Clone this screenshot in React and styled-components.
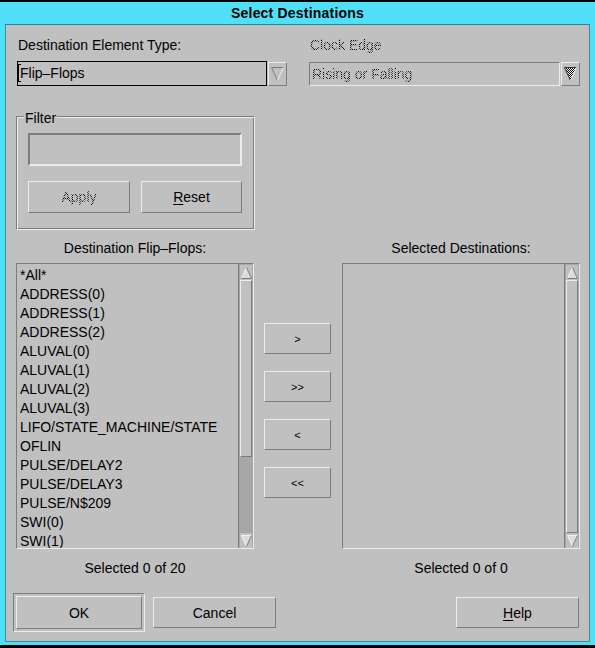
import React from 'react';
import styled, { createGlobalStyle, css } from 'styled-components';

const FACE = '#c0c0c0';
const LIGHT = '#ececec';
const DARK = '#7c7c7c';
const CYAN = '#4fe0f8';

const GlobalStyle = createGlobalStyle`
  html, body {
    margin: 0;
    padding: 0;
    background: #000;
  }
  body {
    font-family: "Liberation Sans", Arial, sans-serif;
    color: #000;
  }
`;

const raised = css`
  border: 1px solid;
  border-color: ${LIGHT} ${DARK} ${DARK} ${LIGHT};
`;

const sunken = css`
  border: 1px solid;
  border-color: ${DARK} ${LIGHT} ${LIGHT} ${DARK};
`;

const etched = css`
  border: 1px solid;
  border-color: ${DARK} ${LIGHT} ${LIGHT} ${DARK};
  box-shadow: inset 1px 1px 0 ${LIGHT}, inset -1px -1px 0 ${DARK};
`;

const stipple = css`
  color: transparent;
  background-image: repeating-conic-gradient(#000 0 25%, transparent 0 50%);
  background-size: 2px 2px;
  -webkit-background-clip: text;
  background-clip: text;
  text-decoration-color: #666;
`;

const Window = styled.div`
  box-sizing: border-box;
  width: 595px;
  height: 648px;
  background: ${CYAN};
  border-top: 2px solid #000;
  border-bottom: 3px solid #000;
  padding: 1px 5px 3px 5px;
  display: flex;
  flex-direction: column;
`;

const TitleBar = styled.div`
  box-sizing: border-box;
  height: 22px;
  border-bottom: 1px solid #1b8c9e;
  text-align: center;
  font-weight: bold;
  font-size: 14px;
  letter-spacing: 0.2px;
  line-height: 21px;
`;

const Body = styled.div`
  flex: 1;
  box-sizing: border-box;
  background: ${FACE};
  border: 1px solid #3d8f9c;
  border-top: none;
  padding: 0 9px 0 10px;
  display: flex;
  flex-direction: column;
`;

const TopRow = styled.div`
  display: grid;
  grid-template-columns: 270px 271px;
  column-gap: 22px;
  margin-left: 1px;
  padding-top: 12px;
`;

const Field = styled.div`
  display: flex;
  flex-direction: column;
  gap: 7px;
`;

const Label = styled.div`
  font-size: 14px;
  line-height: 17px;
  padding-left: 1px;
  ${p => p.$disabled && stipple}
`;

const Combo = styled.div`
  display: flex;
  align-items: center;
  gap: 1px;
  height: 25px;
`;

const ComboText = styled.div`
  position: relative;
  box-sizing: border-box;
  width: ${p => p.$width}px;
  height: ${p => (p.$focused ? 25 : 24)}px;
  ${p => (p.$focused ? 'border: 1px solid #000;' : sunken)}
  padding-left: 2px;
  font-size: 14px;
  line-height: ${p => (p.$focused ? 23 : 22)}px;
  white-space: nowrap;
  overflow: hidden;
  ${p => p.$disabled && css`
    & > span { ${stipple} }
  `}
`;

const Caret = styled.span`
  position: absolute;
  left: 0;
  top: 2px;
  width: 3px;
  height: 18px;
  border: 1px solid #000;
  border-right: none;
  box-sizing: border-box;
`;

const ArrowBox = styled.div`
  box-sizing: border-box;
  width: 19px;
  height: 24px;
  ${raised}
  display: flex;
  align-items: flex-start;
  justify-content: center;
`;

const Group = styled.div`
  position: relative;
  box-sizing: border-box;
  width: 239px;
  height: 114px;
  margin-top: 30px;
  ${etched}
  padding: 16px 0 0 11px;
`;

const GroupLabel = styled.div`
  position: absolute;
  top: -7px;
  left: 7px;
  padding: 0 1px;
  background: ${FACE};
  font-size: 14px;
  line-height: 17px;
`;

const TextInput = styled.div`
  box-sizing: border-box;
  width: 214px;
  height: 33px;
  border: 2px solid;
  border-color: ${DARK} ${LIGHT} ${LIGHT} ${DARK};
`;

const GroupButtons = styled.div`
  display: flex;
  gap: 11px;
  margin-top: 15px;
`;

const PushButton = styled.button`
  box-sizing: border-box;
  width: ${p => p.$w}px;
  height: ${p => p.$h || 31}px;
  ${raised}
  background: ${FACE};
  padding: 0;
  margin: 0;
  font-family: "Liberation Sans", Arial, sans-serif;
  font-size: ${p => p.$small ? 11 : 14}px;
  color: #000;
  display: flex;
  align-items: center;
  justify-content: center;
  u { text-decoration-thickness: 1px; text-underline-offset: 2px; }
  ${p => p.$disabled && css`
    & > span { ${stipple} }
  `}
`;

const ListsRow = styled.div`
  display: flex;
  align-items: flex-start;
  margin-top: 10px;
`;

const ListColumn = styled.div`
  width: 238px;
  display: flex;
  flex-direction: column;
  align-items: center;
`;

const ColumnTitle = styled.div`
  font-size: 14px;
  line-height: 17px;
  margin-bottom: 6px;
`;

const ListBox = styled.div`
  box-sizing: border-box;
  width: 100%;
  height: 286px;
  ${sunken}
  display: flex;
`;

const Items = styled.div`
  flex: 1;
  overflow: hidden;
  padding: 2px 0 0 3px;
`;

const Item = styled.div`
  font-size: 14px;
  line-height: 19px;
  white-space: nowrap;
`;

const ScrollBar = styled.div`
  box-sizing: border-box;
  width: 15px;
  border-left: 1px solid ${DARK};
  background: #a7a7a7;
  display: flex;
  flex-direction: column;
  padding: 1px 1px 0 1px;
`;

const ScrollArrow = styled.div`
  height: 15px;
  flex: 0 0 15px;
  background: ${FACE};
  display: flex;
  align-items: center;
  justify-content: center;
`;

const Track = styled.div`
  flex: 1;
  display: flex;
  flex-direction: column;
`;

const Thumb = styled.div`
  box-sizing: border-box;
  background: ${FACE};
  border: 1px solid;
  border-color: ${LIGHT} ${DARK} ${DARK} ${LIGHT};
`;

const CountLabel = styled.div`
  margin-top: 11px;
  font-size: 14px;
  line-height: 17px;
`;

const ArrowColumn = styled.div`
  width: 67px;
  margin: 0 11px 0 10px;
  padding-top: 83px;
  display: flex;
  flex-direction: column;
  gap: 17px;
`;

const BottomRow = styled.div`
  display: flex;
  align-items: center;
  margin-top: 16px;
  margin-left: -3px;
`;

const DefaultFrame = styled.div`
  ${sunken}
  padding: 2px;
  margin-right: 8px;
`;

const Spacer = styled.div`
  flex: 1;
`;

const HelpWrap = styled.div`
  margin-right: 1px;
`;

const UpTriangle = () => (
  <svg width="11" height="12" viewBox="0 0 11 12">
    <polygon points="5.5,0.5 10.5,11.5 0.5,11.5" fill="#dcdcdc" />
    <line x1="5.5" y1="0.5" x2="0.5" y2="11.5" stroke="#f4f4f4" strokeWidth="1" />
    <line x1="5.5" y1="0.5" x2="10.5" y2="11.5" stroke={DARK} strokeWidth="1" />
    <line x1="0.5" y1="11.5" x2="10.5" y2="11.5" stroke={DARK} strokeWidth="1" />
  </svg>
);

const DownTriangle = () => (
  <svg width="11" height="12" viewBox="0 0 11 12">
    <polygon points="0.5,0.5 10.5,0.5 5.5,11.5" fill="#dcdcdc" />
    <line x1="0.5" y1="0.5" x2="10.5" y2="0.5" stroke="#f4f4f4" strokeWidth="1" />
    <line x1="0.5" y1="0.5" x2="5.5" y2="11.5" stroke="#f4f4f4" strokeWidth="1" />
    <line x1="10.5" y1="0.5" x2="5.5" y2="11.5" stroke={DARK} strokeWidth="1" />
  </svg>
);

const ComboTriangle = ({ disabled }) => (
  <svg width="13" height="15" viewBox="0 0 13 15" style={{ marginTop: 3 }}>
    <defs>
      <pattern id="checker" width="2" height="2" patternUnits="userSpaceOnUse">
        <rect width="2" height="2" fill="#ffffff" />
        <rect width="1" height="1" fill="#000" />
        <rect x="1" y="1" width="1" height="1" fill="#000" />
      </pattern>
    </defs>
    <polygon
      points="0.5,1.5 12.5,1.5 6.5,14.5"
      fill={disabled ? 'url(#checker)' : FACE}
    />
    <line x1="0.5" y1="1.5" x2="12.5" y2="1.5" stroke={disabled ? '#333' : DARK} />
    <line x1="0.5" y1="1.5" x2="6.5" y2="14.5" stroke={disabled ? '#333' : DARK} />
    <line x1="12.5" y1="1.5" x2="6.5" y2="14.5" stroke={LIGHT} />
  </svg>
);

const ScrollList = ({ items, total, visible }) => {
  const pct = total > visible ? (visible / total) * 100 : 100;
  return (
    <ListBox>
      <Items>
        {items.map(it => (
          <Item key={it}>{it}</Item>
        ))}
      </Items>
      <ScrollBar>
        <ScrollArrow><UpTriangle /></ScrollArrow>
        <Track>
          <Thumb style={{ height: `${pct}%` }} />
        </Track>
        <ScrollArrow><DownTriangle /></ScrollArrow>
      </ScrollBar>
    </ListBox>
  );
};

const flipFlops = [
  '*All*',
  'ADDRESS(0)',
  'ADDRESS(1)',
  'ADDRESS(2)',
  'ALUVAL(0)',
  'ALUVAL(1)',
  'ALUVAL(2)',
  'ALUVAL(3)',
  'LIFO/STATE_MACHINE/STATE',
  'OFLIN',
  'PULSE/DELAY2',
  'PULSE/DELAY3',
  'PULSE/N$209',
  'SWI(0)',
  'SWI(1)',
];

const App = () => {
  return (
    <>
      <GlobalStyle />
      <Window>
        <TitleBar>Select Destinations</TitleBar>
        <Body>
          <TopRow>
            <Field>
              <Label>Destination Element Type:</Label>
              <Combo>
                <ComboText $width={250} $focused>
                  <Caret />
                  <span>Flip–Flops</span>
                </ComboText>
                <ArrowBox><ComboTriangle /></ArrowBox>
              </Combo>
            </Field>
            <Field>
              <Label $disabled>Clock Edge</Label>
              <Combo>
                <ComboText $width={251} $disabled>
                  <span>Rising or Falling</span>
                </ComboText>
                <ArrowBox><ComboTriangle disabled /></ArrowBox>
              </Combo>
            </Field>
          </TopRow>

          <Group>
            <GroupLabel>Filter</GroupLabel>
            <TextInput />
            <GroupButtons>
              <PushButton $w={102} $h={32} $disabled><span><u>A</u>pply</span></PushButton>
              <PushButton $w={101} $h={32}><span><u>R</u>eset</span></PushButton>
            </GroupButtons>
          </Group>

          <ListsRow>
            <ListColumn>
              <ColumnTitle>Destination Flip–Flops:</ColumnTitle>
              <ScrollList items={flipFlops} total={20} visible={14} />
              <CountLabel>Selected 0 of 20</CountLabel>
            </ListColumn>
            <ArrowColumn>
              <PushButton $w={67} $small><span>&gt;</span></PushButton>
              <PushButton $w={67} $small><span>&gt;&gt;</span></PushButton>
              <PushButton $w={67} $small><span>&lt;</span></PushButton>
              <PushButton $w={67} $small><span>&lt;&lt;</span></PushButton>
            </ArrowColumn>
            <ListColumn>
              <ColumnTitle>Selected Destinations:</ColumnTitle>
              <ScrollList items={[]} total={0} visible={14} />
              <CountLabel>Selected 0 of 0</CountLabel>
            </ListColumn>
          </ListsRow>

          <BottomRow>
            <DefaultFrame>
              <PushButton $w={126} $h={33}><span>OK</span></PushButton>
            </DefaultFrame>
            <PushButton $w={123}><span>Cancel</span></PushButton>
            <Spacer />
            <HelpWrap>
              <PushButton $w={123}><span><u>H</u>elp</span></PushButton>
            </HelpWrap>
          </BottomRow>
        </Body>
      </Window>
    </>
  );
};

export default App;
